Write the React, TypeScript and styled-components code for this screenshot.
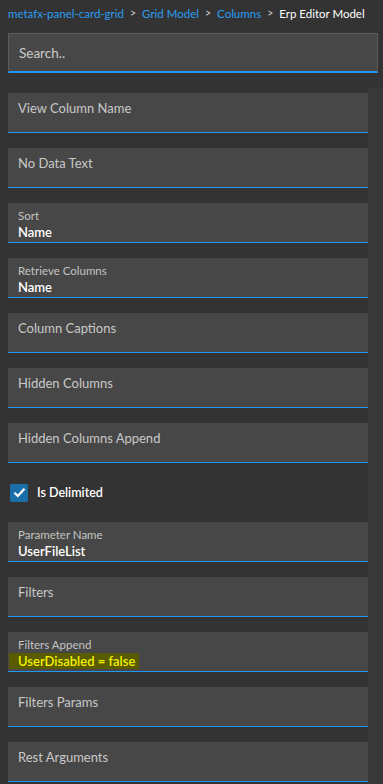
import React from "react";
import styled, { createGlobalStyle } from "styled-components";

const GlobalStyle = createGlobalStyle`
  html, body {
    margin: 0;
    padding: 0;
    background: #333333;
  }
  body {
    font-family: Lato, "Noto Sans", sans-serif;
  }
`;

const Page = styled.div`
  width: 383px;
  height: 784px;
  overflow: hidden;
  background: #333333;
  display: flex;
  flex-direction: column;
`;

const Header = styled.div`
  padding: 5px 5px 0 8px;
`;

const Breadcrumb = styled.div`
  display: flex;
  align-items: center;
  gap: 6px;
  height: 16px;
  font-size: 11.5px;
  white-space: nowrap;
`;

const Crumb = styled.span<{ $current?: boolean }>`
  color: ${(p) => (p.$current ? "#ffffff" : "#2a9df4")};
`;

const Separator = styled.span`
  color: #cfcfcf;
  font-size: 10.5px;
`;

const SearchBox = styled.div`
  margin-top: 12px;
  height: 40px;
  box-sizing: border-box;
  background: #474747;
  border: 1px solid #5c5c5c;
  border-bottom: 2px solid #2196f3;
  display: flex;
  align-items: center;
  padding-left: 10px;
  font-size: 13.5px;
  color: #cccccc;
`;

const Body = styled.div`
  flex: 1;
  margin-top: 15px;
  display: flex;
  min-height: 0;
`;

const List = styled.div`
  width: 360px;
  padding: 5px 0 0 8px;
  display: flex;
  flex-direction: column;
  gap: 15px;
`;

const ScrollTrack = styled.div`
  flex: 1;
  background: #383838;
`;

const Field = styled.div`
  height: 40px;
  box-sizing: border-box;
  flex-shrink: 0;
  background: #474747;
  border-bottom: 1px solid #2196f3;
  padding: 6px 10px 0;
  display: flex;
  flex-direction: column;
`;

const Placeholder = styled.div`
  font-size: 13px;
  line-height: 18px;
  color: #c9c9c9;
`;

const Label = styled.div`
  font-size: 11.5px;
  line-height: 14px;
  color: #c4c4c4;
`;

const Value = styled.div<{ $highlight?: boolean }>`
  margin-top: 1px;
  font-size: 13px;
  line-height: 16px;
  font-weight: 600;
  color: ${(p) => (p.$highlight ? "#f2f200" : "#ffffff")};
  align-self: flex-start;
  ${(p) =>
    p.$highlight &&
    `
    background: #5a5a00;
    margin-left: -9px;
    padding: 0 4px 0 9px;
  `}
`;

const CheckRow = styled.label`
  height: 29px;
  flex-shrink: 0;
  display: flex;
  align-items: center;
  gap: 9px;
  padding-left: 2px;
  font-size: 12.5px;
  font-weight: 600;
  color: #ffffff;
`;

const CheckBox = styled.span`
  width: 18px;
  height: 18px;
  border-radius: 2px;
  background: #1b6fa8;
  display: flex;
  align-items: center;
  justify-content: center;
`;

type FieldData = {
  label: string;
  value?: string;
  highlight?: boolean;
};

const beforeCheck: FieldData[] = [
  { label: "View Column Name" },
  { label: "No Data Text" },
  { label: "Sort", value: "Name" },
  { label: "Retrieve Columns", value: "Name" },
  { label: "Column Captions" },
  { label: "Hidden Columns" },
  { label: "Hidden Columns Append" },
];

const afterCheck: FieldData[] = [
  { label: "Parameter Name", value: "UserFileList" },
  { label: "Filters" },
  { label: "Filters Append", value: "UserDisabled = false", highlight: true },
  { label: "Filters Params" },
  { label: "Rest Arguments" },
];

const renderField = (f: FieldData) => (
  <Field key={f.label}>
    {f.value ? (
      <>
        <Label>{f.label}</Label>
        <Value $highlight={f.highlight}>{f.value}</Value>
      </>
    ) : (
      <Placeholder>{f.label}</Placeholder>
    )}
  </Field>
);

const App = () => {
  return (
    <>
      <GlobalStyle />
      <Page>
        <Header>
          <Breadcrumb>
            <Crumb>metafx-panel-card-grid</Crumb>
            <Separator>&gt;</Separator>
            <Crumb>Grid Model</Crumb>
            <Separator>&gt;</Separator>
            <Crumb>Columns</Crumb>
            <Separator>&gt;</Separator>
            <Crumb $current>Erp Editor Model</Crumb>
          </Breadcrumb>
          <SearchBox>Search..</SearchBox>
        </Header>
        <Body>
          <List>
            {beforeCheck.map(renderField)}
            <CheckRow>
              <CheckBox>
                <svg width="13" height="11" viewBox="0 0 13 11">
                  <path
                    d="M1.5 5.8 L4.8 9 L11.5 1.8"
                    fill="none"
                    stroke="#ffffff"
                    strokeWidth="2.2"
                  />
                </svg>
              </CheckBox>
              Is Delimited
            </CheckRow>
            {afterCheck.map(renderField)}
          </List>
          <ScrollTrack />
        </Body>
      </Page>
    </>
  );
};

export default App;
